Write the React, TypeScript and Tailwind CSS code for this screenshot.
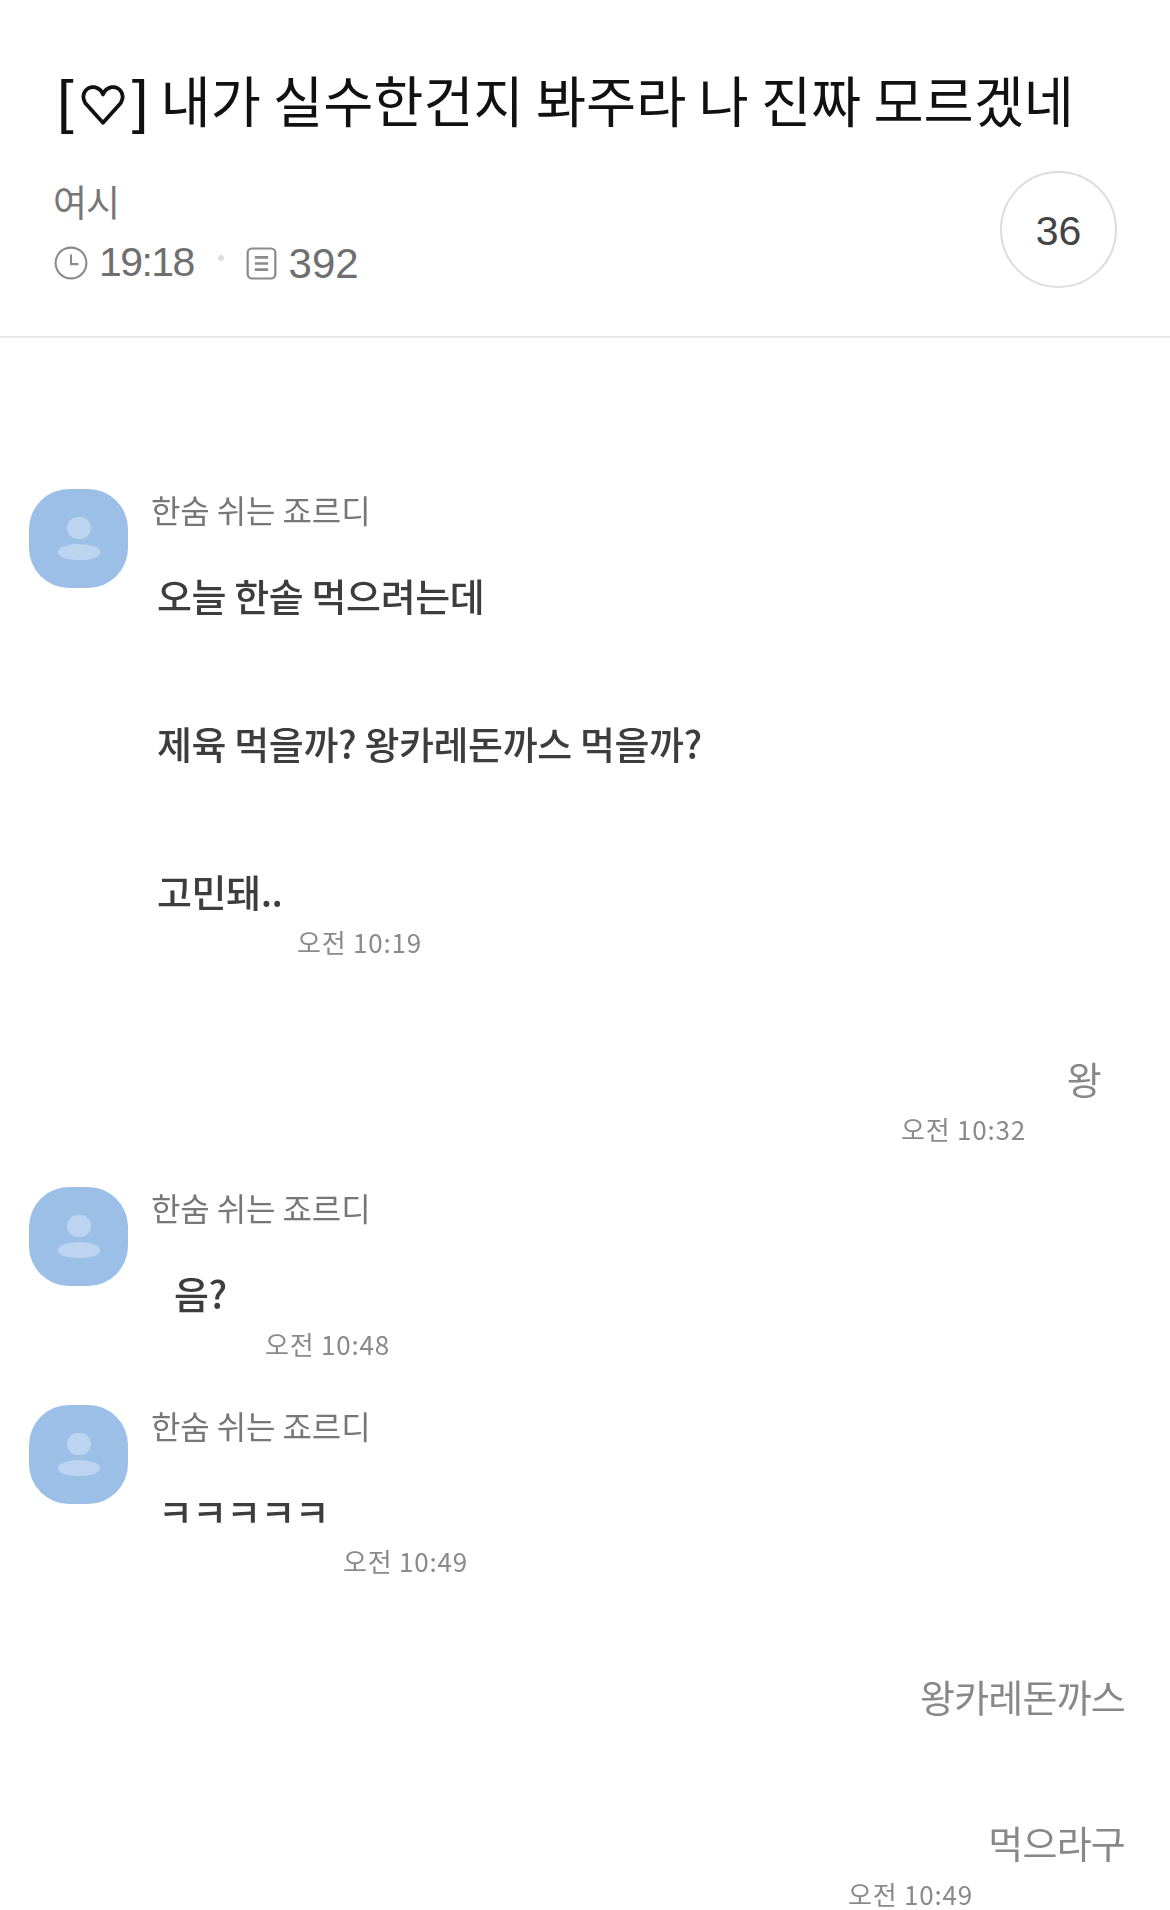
const CJK = "font-['Noto_Sans_CJK_KR','Noto_Sans',sans-serif]";

function Avatar() {
  return (
    <div className="w-[99px] h-[99px] shrink-0 rounded-[40px] bg-[#9bbfe6] flex flex-col items-center justify-center blur-[0.6px]">
      <div className="w-[24px] h-[22px] rounded-full bg-[#bcd4ef]" />
      <div className="w-[42px] h-[16px] mt-[5px] rounded-t-[50%] rounded-b-[45%] bg-[#bcd4ef]" />
    </div>
  );
}

function Name() {
  return <div className={`h-[40px] leading-[40px] ml-[23px] text-[32px] tracking-[-0.1px] text-[#777] blur-[0.5px] ${CJK}`}>한숨 쉬는 죠르디</div>;
}

function Time({ children, className }: { children: string; className: string }) {
  return <div className={`h-[32px] leading-[32px] text-[26px] tracking-[0.8px] text-[#8a8a8a] blur-[0.5px] ${CJK} ${className}`}>{children}</div>;
}

function Msg({ children, className }: { children: string; className: string }) {
  return <div className={`h-[48px] leading-[48px] text-[38px] tracking-[-0.4px] text-[#3d3d3d] font-medium blur-[0.6px] ${CJK} ${className}`}>{children}</div>;
}

function Mine({ children, className }: { children: string; className: string }) {
  return <div className={`h-[48px] leading-[48px] text-[38px] tracking-[-0.8px] text-[#888] blur-[0.5px] text-right ${CJK} ${className}`}>{children}</div>;
}

export default function App() {
  return (
    <div className="w-[1170px] h-[1910px] overflow-hidden bg-white">
      <header className="h-[338px] border-b-2 border-[#e8e8e8] relative">
        <h1 className={`pt-[64px] pl-[57px] h-[179px] leading-[70px] text-[54.5px] tracking-[0px] font-normal text-[#111] whitespace-nowrap ${CJK}`}>
          <span className="font-['Liberation_Sans'] text-[60px]">[</span>
          <svg viewBox="0 0 42 40" className="inline-block w-[44px] h-[42px] mx-[7px] align-[-4px]" fill="none" stroke="#111" strokeWidth="3.6" strokeLinejoin="round">
            <path d="M21 37 L4 18 C-1 9 6 2 13 3 C17 4 20 7 21 10 C22 7 25 4 29 3 C36 2 43 9 38 18 Z" />
          </svg>
          <span className="font-['Liberation_Sans'] text-[60px]">]</span> 내가 실수한건지 봐주라 나 진짜 모르겠네
        </h1>
        <div className={`pl-[53px] h-[44px] leading-[44px] text-[37px] tracking-[-1px] text-[#777] ${CJK}`}>여시</div>
        <div className="mt-[18px] pl-[54px] flex items-center h-[44px] font-['Liberation_Sans',sans-serif] text-[41px] text-[#6f6f6f]">
          <svg viewBox="0 0 32 32" className="w-[34px] h-[34px]" fill="none" stroke="#8a8a8a" strokeWidth="2">
            <circle cx="16" cy="16" r="14.5" />
            <path d="M16 8v9h7" />
          </svg>
          <span className="ml-[11px] tracking-[-1.6px]">19:18</span>
          <span className="ml-[24px] w-[6px] h-[6px] -mt-[10px] rounded-full bg-[#ddd]" />
          <svg viewBox="0 0 28 32" preserveAspectRatio="none" className="ml-[22px] w-[31px] h-[33px]" fill="none" stroke="#8a8a8a" strokeWidth="2">
            <rect x="1.5" y="1.5" width="25" height="29" rx="4" />
            <path d="M8 10h12M8 16h12M8 22h12" strokeWidth="2.6" />
          </svg>
          <span className="ml-[12px] text-[42px]">392</span>
        </div>
        <div className="absolute left-[1000px] top-[171px] w-[117px] h-[117px] pt-[5px] rounded-full border-[2px] border-[#ddd] flex items-center justify-center font-['Liberation_Sans',sans-serif] text-[41px] text-[#444]">36</div>
      </header>

      <main className="pl-[29px] pr-[45px]">
        <div className="flex mt-[151px] h-[490px]">
          <Avatar />
          <div className="flex-1">
            <Name />
            <Msg className="ml-[29px] mt-[42px]">오늘 한솥 먹으려는데</Msg>
            <Msg className="ml-[29px] mt-[100px]">제육 먹을까? 왕카레돈까스 먹을까?</Msg>
            <Msg className="ml-[29px] mt-[100px]">고민돼..</Msg>
            <Time className="ml-[169px] mt-[11px]">오전 10:19</Time>
          </div>
        </div>

        <Mine className="mt-[75px] mr-[24px]">왕</Mine>
        <Time className="mt-[11px] ml-[872px]">오전 10:32</Time>

        <div className="flex mt-[42px] h-[218px]">
          <Avatar />
          <div className="flex-1">
            <Name />
            <Msg className="ml-[46px] mt-[42px]">음?</Msg>
            <Time className="ml-[137px] mt-[11px]">오전 10:48</Time>
          </div>
        </div>

        <div className="flex h-[174px]">
          <Avatar />
          <div className="flex-1">
            <Name />
            <Msg className="ml-[30px] mt-[42px] tracking-[-0.8px]">ㅋㅋㅋㅋㅋ</Msg>
            <Time className="ml-[215px] mt-[10px]">오전 10:49</Time>
          </div>
        </div>

        <Mine className="mt-[93px]">왕카레돈까스</Mine>
        <Mine className="mt-[98px]">먹으라구</Mine>
        <div className={`mt-[15px] ml-[819px] h-[26px] leading-[26px] text-[26px] tracking-[0.8px] text-[#8a8a8a] blur-[0.5px] ${CJK}`}>오전 10:49</div>
      </main>
    </div>
  );
}
